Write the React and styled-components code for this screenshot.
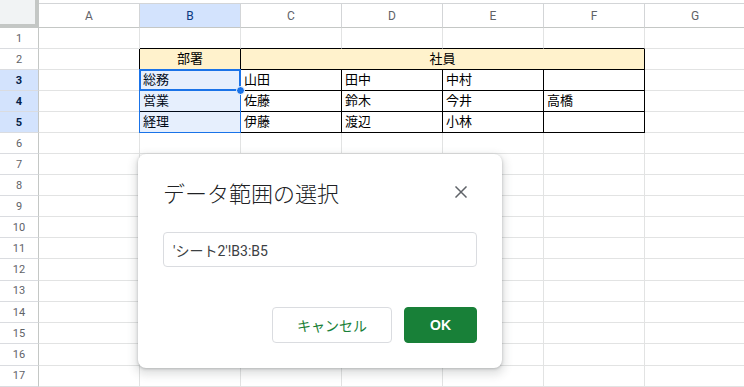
import React from "react";
import styled, { createGlobalStyle } from "styled-components";

const Global = createGlobalStyle`
  html, body { margin: 0; padding: 0; background: #fff; overflow: hidden; }
  body { font-family: "Liberation Sans", "Noto Sans CJK JP", Arial, sans-serif; }
  * { box-sizing: border-box; }
`;

const Page = styled.div`
  position: relative;
  width: 744px;
  height: 387px;
  overflow: hidden;
`;

const Grid = styled.div`
  display: grid;
  grid-template-columns: 39px repeat(7, 101px);
  grid-template-rows: 28px repeat(10, 21px) repeat(7, 21.3px);
`;

const Corner = styled.div`
  background: #f1f3f4;
  border-right: 4px solid #c4c7c5;
  border-bottom: 4px solid #c4c7c5;
`;

const ColHeader = styled.div`
  margin-top: 3px;
  border-top: 1px solid #d3d5d7;
  border-right: 1px solid #d3d5d7;
  border-bottom: 1px solid #c4c7c5;
  background: ${(p) => (p.$active ? "#d3e3fd" : "#fff")};
  color: ${(p) => (p.$active ? "#0b3a82" : "#5f6368")};
  font-family: Roboto, "Liberation Sans", sans-serif;
  font-size: 12px;
  display: flex;
  align-items: center;
  justify-content: center;
`;

const RowHeader = styled.div`
  border-right: 1px solid #c4c7c5;
  border-bottom: 1px solid #dadce0;
  background: ${(p) => (p.$active ? "#d3e3fd" : "#fff")};
  color: ${(p) => (p.$active ? "#041e49" : "#5f6368")};
  font-weight: ${(p) => (p.$active ? 700 : 400)};
  font-family: Roboto, "Liberation Sans", sans-serif;
  font-size: 11px;
  display: flex;
  align-items: center;
  justify-content: center;
`;

const Cell = styled.div`
  grid-column: span ${(p) => p.$span || 1};
  border-right: 1px solid ${(p) => (p.$rb ? "#000" : "#e2e3e3")};
  border-bottom: 1px solid ${(p) => (p.$bb ? "#000" : "#e2e3e3")};
  background: ${(p) => p.$bg || "#fff"};
  color: #000;
  font-family: "Liberation Sans", "Noto Sans CJK JP", sans-serif;
  font-size: 13px;
  line-height: 20px;
  padding: 0 3px;
  text-align: ${(p) => p.$align || "left"};
  white-space: nowrap;
  overflow: hidden;
`;

const Selection = styled.div`
  position: absolute;
  left: 139px;
  top: 69px;
  width: 102px;
  height: 64px;
  border: 1px solid #1a73e8;
  background: rgba(14, 101, 235, 0.1);
  pointer-events: none;
`;

const ActiveCell = styled.div`
  position: absolute;
  left: 139px;
  top: 69px;
  width: 102px;
  height: 22px;
  border: 2px solid #1a73e8;
  pointer-events: none;
`;

const FillHandle = styled.div`
  position: absolute;
  left: 236px;
  top: 86px;
  width: 9px;
  height: 9px;
  border-radius: 50%;
  background: #1a73e8;
  border: 1px solid #fff;
`;

const Dialog = styled.div`
  position: absolute;
  left: 138px;
  top: 154px;
  width: 364px;
  height: 214px;
  background: #fff;
  border-radius: 8px;
  box-shadow: 0 4px 8px 3px rgba(60, 64, 67, 0.15), 0 1px 3px rgba(60, 64, 67, 0.3);
  padding: 22px 25px 25px 25px;
  display: flex;
  flex-direction: column;
`;

const DialogHead = styled.div`
  display: flex;
  align-items: center;
  justify-content: space-between;
  height: 32px;
`;

const Title = styled.h1`
  margin: 0;
  font-family: "Noto Sans CJK JP", sans-serif;
  font-weight: 300;
  font-size: 22px;
  line-height: 32px;
  color: #202124;
`;

const CloseButton = styled.button`
  width: 24px;
  height: 24px;
  margin-right: 4px;
  padding: 0;
  border: none;
  background: transparent;
  display: flex;
  align-items: center;
  justify-content: center;
`;

const Input = styled.div`
  margin-top: 24px;
  height: 35px;
  border: 1px solid #dadce0;
  border-radius: 4px;
  padding: 0 9px;
  display: flex;
  align-items: center;
  font-family: Roboto, "Noto Sans CJK JP", sans-serif;
  font-size: 14px;
  color: #3c4043;
`;

const Actions = styled.div`
  margin-top: 40px;
  display: flex;
  justify-content: flex-end;
  gap: 12px;
`;

const Button = styled.button`
  height: 36px;
  padding: 0 ${(p) => (p.$primary ? "25px" : "24px")};
  border-radius: 4px;
  border: 1px solid ${(p) => (p.$primary ? "#188038" : "#dadce0")};
  background: ${(p) => (p.$primary ? "#188038" : "#fff")};
  color: ${(p) => (p.$primary ? "#fff" : "#188038")};
  font-family: ${(p) => (p.$primary ? '"Liberation Sans", Arial, sans-serif' : '"Noto Sans CJK JP", sans-serif')};
  font-weight: ${(p) => (p.$primary ? 700 : 400)};
  font-size: 14px;
`;

const cols = ["A", "B", "C", "D", "E", "F", "G"];
const data = {
  3: ["総務", "山田", "田中", "中村", ""],
  4: ["営業", "佐藤", "鈴木", "今井", "高橋"],
  5: ["経理", "伊藤", "渡辺", "小林", ""],
};

function renderRow(r) {
  const cells = [];
  cells.push(
    <RowHeader key="h" $active={r >= 3 && r <= 5}>
      {r}
    </RowHeader>
  );
  if (r === 2) {
    cells.push(<Cell key="A" $rb />);
    cells.push(
      <Cell key="B" $rb $bb $bg="#fff2cc" $align="center">
        部署
      </Cell>
    );
    cells.push(
      <Cell key="CF" $span={4} $rb $bb $bg="#fff2cc" $align="center">
        社員
      </Cell>
    );
    cells.push(<Cell key="G" />);
    return cells;
  }
  cols.forEach((c, i) => {
    const inTable = r >= 3 && r <= 5 && i >= 1 && i <= 5;
    const rb = r >= 3 && r <= 5 && i >= 0 && i <= 5;
    const bb = (r === 1 && i >= 1 && i <= 5) || inTable;
    const text = data[r] && i >= 1 && i <= 5 ? data[r][i - 1] : "";
    cells.push(
      <Cell key={c} $rb={rb} $bb={bb}>
        {text}
      </Cell>
    );
  });
  return cells;
}

export default function App() {
  const rows = Array.from({ length: 17 }, (_, i) => i + 1);
  return (
    <Page>
      <Global />
      <Grid>
        <Corner />
        {cols.map((c) => (
          <ColHeader key={c} $active={c === "B"}>
            {c}
          </ColHeader>
        ))}
        {rows.map((r) => (
          <React.Fragment key={r}>{renderRow(r)}</React.Fragment>
        ))}
      </Grid>
      <Selection />
      <ActiveCell />
      <FillHandle />
      <Dialog>
        <DialogHead>
          <Title>データ範囲の選択</Title>
          <CloseButton aria-label="閉じる">
            <svg width="12" height="12" viewBox="0 0 12 12">
              <path d="M1 1L11 11M11 1L1 11" stroke="#5f6368" strokeWidth="1.5" strokeLinecap="square" />
            </svg>
          </CloseButton>
        </DialogHead>
        <Input>'シート2'!B3:B5</Input>
        <Actions>
          <Button>キャンセル</Button>
          <Button $primary>OK</Button>
        </Actions>
      </Dialog>
    </Page>
  );
}
